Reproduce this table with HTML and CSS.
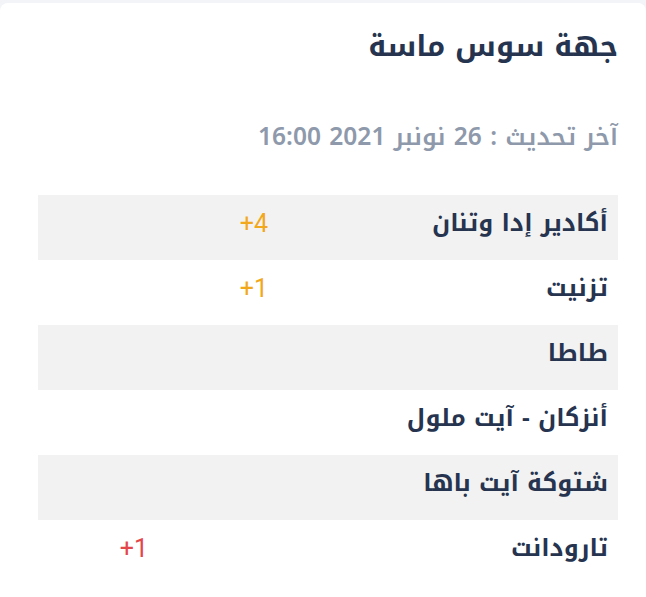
FILE: index.html
```html
<!DOCTYPE html>
<html lang="ar" dir="rtl">
<head>
<meta charset="utf-8">
<title>جهة سوس ماسة</title>
<link rel="stylesheet" href="styles.css">
</head>
<body>
<div class="card">
  <h1 class="title">جهة سوس ماسة</h1>
  <p class="updated">آخر تحديث : 26 نونبر 2021 16:00</p>
  <div class="table">
    <div class="row alt">
      <div class="cell name">أكادير إدا وتنان</div>
      <div class="cell num warn"><span dir="ltr">+4</span></div>
      <div class="cell num"></div>
    </div>
    <div class="row">
      <div class="cell name">تزنيت</div>
      <div class="cell num warn"><span dir="ltr">+1</span></div>
      <div class="cell num"></div>
    </div>
    <div class="row alt">
      <div class="cell name">طاطا</div>
      <div class="cell num"></div>
      <div class="cell num"></div>
    </div>
    <div class="row">
      <div class="cell name">أنزكان - آيت ملول</div>
      <div class="cell num"></div>
      <div class="cell num"></div>
    </div>
    <div class="row alt">
      <div class="cell name">شتوكة آيت باها</div>
      <div class="cell num"></div>
      <div class="cell num"></div>
    </div>
    <div class="row">
      <div class="cell name">تارودانت</div>
      <div class="cell num"></div>
      <div class="cell num danger"><span dir="ltr">+1</span></div>
    </div>
  </div>
</div>
</body>
</html>
```

FILE: styles.css
```css
html, body {
  margin: 0;
  padding: 0;
}
body {
  background: #f2f4f7;
  font-family: "Noto Kufi Arabic", "Noto Sans Arabic", "DejaVu Sans", sans-serif;
  width: 646px;
  height: 597px;
  overflow: hidden;
}
.card {
  margin-top: 3px;
  background: #ffffff;
  border-radius: 8px 8px 0 0;
  padding: 24px 28px 0 38px;
  height: 594px;
  box-sizing: border-box;
}
.title {
  margin: 0;
  font-size: 29px;
  line-height: 40px;
  font-weight: 700;
  color: #26344f;
}
.updated {
  margin: 54px 0 0 0;
  font-size: 24.5px;
  line-height: 32px;
  font-weight: 600;
  color: #8e99ab;
}
.table {
  margin-top: 42px;
  display: flex;
  flex-direction: column;
}
.row {
  display: grid;
  grid-template-columns: 340px 123px 1fr;
  height: 65px;
  box-sizing: border-box;
  padding-bottom: 9px;
  align-items: center;
  background: #ffffff;
}
.row.alt {
  background: #f2f2f2;
}
.cell {
  padding-right: 10px;
  text-align: right;
}
.num.danger {
  padding-right: 7px;
}
.name {
  font-size: 24px;
  font-weight: 700;
  color: #26344f;
}
.num {
  font-family: Roboto, "Liberation Sans", sans-serif;
  font-size: 25px;
  font-weight: 400;
}
.warn {
  color: #f2a81d;
}
.danger {
  color: #e3474b;
}
```
